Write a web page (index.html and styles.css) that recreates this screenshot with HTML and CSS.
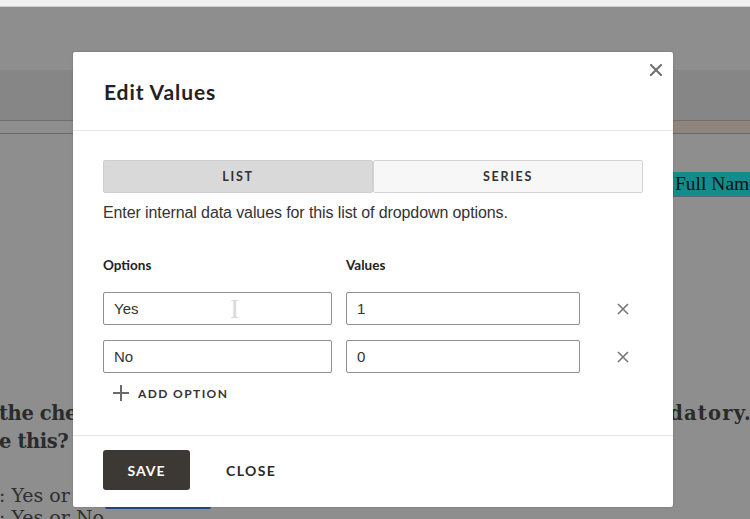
FILE: index.html
```html
<!DOCTYPE html>
<html>
<head>
<meta charset="utf-8">
<link rel="stylesheet" href="styles.css">
</head>
<body>
<div class="page">
  <div class="topstrip"></div>
  <div class="spacer"></div>
  <div class="navband"></div>
  <div class="tanrow"><div class="tan"></div></div>
  <div class="tealrow"><div class="teal">Full Name</div></div>
  <div class="heading">
    <div class="hline"><span class="hl">the checkbox</span><span class="hr">is mandatory.</span></div>
    <div class="hline"><span class="hl">e this?</span></div>
  </div>
  <div class="answers">
    <div class="aline">: Yes or No</div>
    <div class="aline">: Yes or No</div>
  </div>
  <div class="blueline"></div>
</div>

<div class="modal">
  <div class="modal-header">
    <h2 class="modal-title">Edit Values</h2>
    <button class="close-x" aria-label="Close">
      <svg width="12" height="12" viewBox="0 0 12 12"><path d="M1 1L11 11M11 1L1 11" stroke="#6e6e6e" stroke-width="2" stroke-linecap="square"/></svg>
    </button>
  </div>
  <div class="modal-body">
    <div class="tabs">
      <div class="tab active">LIST</div>
      <div class="tab">SERIES</div>
    </div>
    <p class="desc">Enter internal data values for this list of dropdown options.</p>
    <div class="labels">
      <div class="lbl lbl-opt">Options</div>
      <div class="lbl">Values</div>
    </div>
    <div class="row">
      <div class="input inp-opt">Yes<span class="caret">I</span></div>
      <div class="input inp-val">1</div>
      <div class="remove"><svg width="12" height="12" viewBox="0 0 12 12"><path d="M1 1L11 11M11 1L1 11" stroke="#777" stroke-width="1.6"/></svg></div>
    </div>
    <div class="row">
      <div class="input inp-opt">No</div>
      <div class="input inp-val">0</div>
      <div class="remove"><svg width="12" height="12" viewBox="0 0 12 12"><path d="M1 1L11 11M11 1L1 11" stroke="#777" stroke-width="1.6"/></svg></div>
    </div>
    <div class="add">
      <svg width="16" height="16" viewBox="0 0 16 16"><path d="M8 0V16M0 8H16" stroke="#6a6a6a" stroke-width="2"/></svg>
      <span>ADD OPTION</span>
    </div>
  </div>
  <div class="modal-footer">
    <button class="btn-save">SAVE</button>
    <button class="btn-close">CLOSE</button>
  </div>
</div>
</body>
</html>
```

FILE: styles.css
```css
html, body {
  margin: 0;
  padding: 0;
}
body {
  width: 750px;
  height: 519px;
  overflow: hidden;
  background: #8e8e8e;
  position: relative;
  font-family: "Liberation Sans", Arial, sans-serif;
}
.page {
  display: flex;
  flex-direction: column;
}
.topstrip {
  height: 6px;
  background: #f1f1f1;
  border-bottom: 1px solid #cfcfcf;
}
.spacer {
  height: 63px;
}
.navband {
  height: 50px;
  background: #868686;
  border-bottom: 1px solid #6f6f6f;
}
.tanrow {
  height: 12px;
  display: flex;
  justify-content: flex-end;
  border-bottom: 1px solid #686868;
}
.tan {
  width: 78px;
  background: #8f857d;
}
.tealrow {
  margin-top: 38px;
  display: flex;
  justify-content: flex-end;
}
.teal {
  width: 75px;
  height: 24px;
  padding-left: 3px;
  background: #138c8d;
  color: #111;
  font-family: "Liberation Serif", "Times New Roman", serif;
  font-size: 19.5px;
  line-height: 24px;
  white-space: nowrap;
  overflow: hidden;
  border-bottom: 1px solid #5d6a6a;
}
.heading {
  margin-top: 203px;
  font-family: "DejaVu Serif", serif;
  font-weight: bold;
  font-size: 19.5px;
  color: #2b2b2b;
  line-height: 28px;
}
.hline {
  display: flex;
  justify-content: space-between;
  white-space: nowrap;
  margin-left: -1px;
}
.hl {
  letter-spacing: -0.4px;
}
.hr {
  margin-right: -2px;
  letter-spacing: 1.2px;
}
.answers {
  margin-top: 28px;
  font-family: "DejaVu Serif", serif;
  font-size: 19px;
  color: #2f2f2f;
  line-height: 22px;
  margin-left: -1px;
}
.blueline {
  position: absolute;
  left: 105px;
  top: 504px;
  width: 106px;
  height: 5px;
  background: #24478a;
  border-radius: 2px;
}

/* Modal */
.modal {
  position: absolute;
  left: 73px;
  top: 52px;
  width: 600px;
  height: 455px;
  background: #fff;
  border-radius: 2px;
  box-shadow: 0 0 2px rgba(0,0,0,0.25);
  display: flex;
  flex-direction: column;
}
.modal-header {
  height: 78px;
  border-bottom: 1px solid #e6e6e6;
  display: flex;
  align-items: center;
  padding: 0 31px;
  position: relative;
}
.modal-title {
  margin: 0;
  margin-top: 1px;
  font-family: "Lato", "Open Sans", sans-serif;
  font-weight: bold;
  font-size: 21px;
  letter-spacing: 0.9px;
  color: #222;
}
.close-x {
  position: absolute;
  right: 11px;
  top: 12px;
  border: 0;
  background: none;
  padding: 0;
  width: 12px;
  height: 12px;
  display: flex;
}
.modal-body {
  padding: 29px 30px 0 30px;
  height: 305px;
  border-bottom: 1px solid #e6e6e6;
  box-sizing: border-box;
}
.tabs {
  display: flex;
  height: 33px;
}
.tab {
  flex: 1;
  display: flex;
  align-items: center;
  justify-content: center;
  font-family: "Lato", sans-serif;
  font-weight: bold;
  font-size: 12.5px;
  letter-spacing: 1.7px;
  color: #333;
  background: #f7f7f7;
  border: 1px solid #d3d3d3;
  border-radius: 2px;
}
.tab.active {
  background: #d9d9d9;
  border-color: #cfcfcf;
}
.desc {
  margin: 10px 0 0 0;
  font-size: 16px;
  letter-spacing: -0.1px;
  line-height: 20px;
  color: #333;
}
.labels {
  display: flex;
  margin-top: 33px;
  height: 18px;
  align-items: center;
}
.lbl {
  font-family: "Lato", sans-serif;
  font-weight: bold;
  font-size: 13.5px;
  color: #222;
}
.lbl-opt {
  width: 243px;
}
.row {
  display: flex;
  align-items: center;
  margin-top: 18px;
}
.row + .row {
  margin-top: 15px;
}
.input {
  height: 33px;
  box-sizing: border-box;
  border: 1px solid #8f8f8f;
  border-radius: 2px;
  padding: 0 10px;
  display: flex;
  align-items: center;
  font-size: 15px;
  color: #333;
  position: relative;
}
.inp-opt {
  width: 229px;
}
.inp-val {
  width: 234px;
  margin-left: 14px;
}
.caret {
  position: absolute;
  left: 126px;
  top: 3px;
  font-family: "Liberation Serif", serif;
  font-size: 28px;
  line-height: 26px;
  color: #dadada;
  font-weight: normal;
}
.remove {
  margin-left: 37px;
  width: 12px;
  height: 12px;
  display: flex;
}
.add {
  display: flex;
  align-items: center;
  margin-top: 11px;
  margin-left: 10px;
  height: 18px;
}
.add span {
  margin-left: 9px;
  font-family: "Lato", sans-serif;
  font-weight: bold;
  font-size: 12px;
  letter-spacing: 1.4px;
  color: #333;
}
.modal-footer {
  display: flex;
  align-items: center;
  padding: 14px 30px 16px 30px;
}
.btn-save {
  width: 87px;
  height: 40px;
  border: 0;
  border-radius: 3px;
  background: #3c3834;
  color: #fff;
  font-family: "Lato", sans-serif;
  font-weight: bold;
  font-size: 14px;
  letter-spacing: 1px;
}
.btn-close {
  margin-left: 22px;
  border: 0;
  background: none;
  padding: 0 14px;
  height: 40px;
  color: #2a2a2a;
  font-family: "Lato", sans-serif;
  font-weight: bold;
  font-size: 14px;
  letter-spacing: 1.4px;
}
```
